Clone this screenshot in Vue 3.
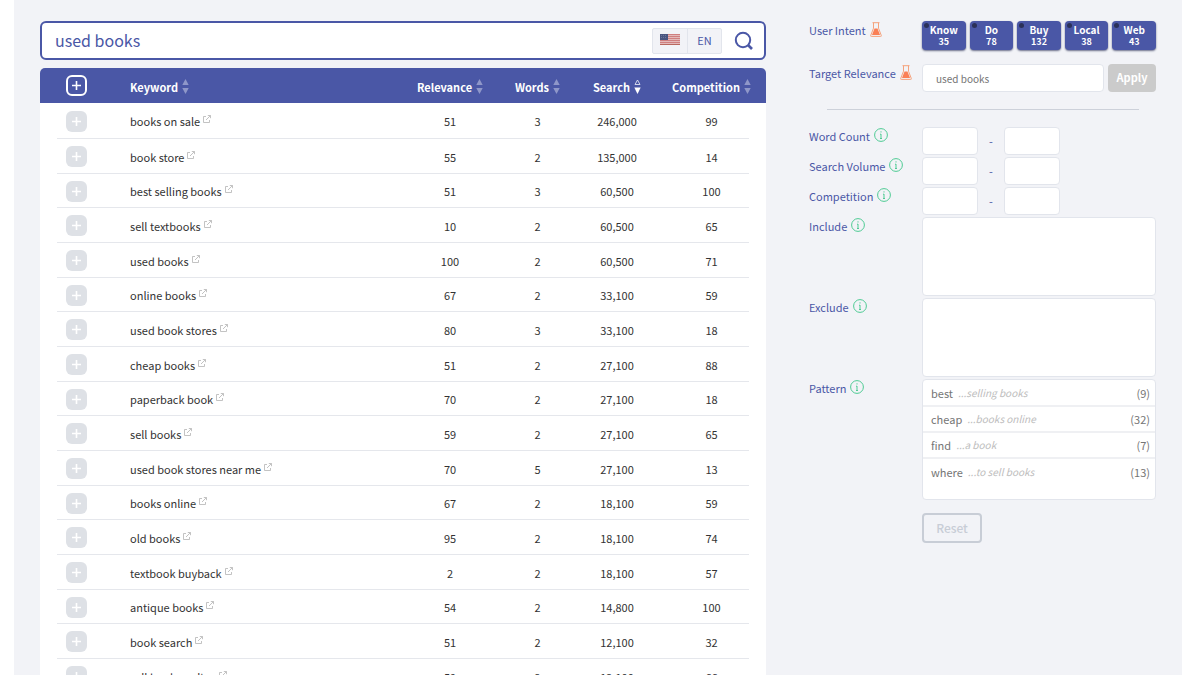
<script setup>
import { ref } from 'vue'

const query = ref('used books')
const target = ref('used books')

const columns = [
  { label: 'Relevance', active: false },
  { label: 'Words', active: false },
  { label: 'Search', active: true },
  { label: 'Competition', active: false },
]

const rows = [
  ['books on sale', 51, 3, '246,000', 99],
  ['book store', 55, 2, '135,000', 14],
  ['best selling books', 51, 3, '60,500', 100],
  ['sell textbooks', 10, 2, '60,500', 65],
  ['used books', 100, 2, '60,500', 71],
  ['online books', 67, 2, '33,100', 59],
  ['used book stores', 80, 3, '33,100', 18],
  ['cheap books', 51, 2, '27,100', 88],
  ['paperback book', 70, 2, '27,100', 18],
  ['sell books', 59, 2, '27,100', 65],
  ['used book stores near me', 70, 5, '27,100', 13],
  ['books online', 67, 2, '18,100', 59],
  ['old books', 95, 2, '18,100', 74],
  ['textbook buyback', 2, 2, '18,100', 57],
  ['antique books', 54, 2, '14,800', 100],
  ['book search', 51, 2, '12,100', 32],
  ['sell books online', 59, 2, '12,100', 66],
]

const intents = [
  ['Know', 35],
  ['Do', 78],
  ['Buy', 132],
  ['Local', 38],
  ['Web', 43],
]

const ranges = ['Word Count', 'Search Volume', 'Competition']
const areas = ['Include', 'Exclude']

const patterns = [
  ['best', '...selling books', 9],
  ['cheap', '...books online', 32],
  ['find', '...a book', 7],
  ['where', '...to sell books', 13],
]
</script>

<template>
  <div class="page">
    <main class="results">
      <form class="search" @submit.prevent>
        <input v-model="query" class="search-input" type="text" aria-label="Keyword search" />
        <div class="locale">
          <button type="button" class="locale-btn" aria-label="Country: United States">
            <svg width="20" height="11" viewBox="0 0 20 11" aria-hidden="true">
              <rect width="20" height="11" fill="#e3b9b9" />
              <path d="M0 .5h20M0 2.5h20M0 4.5h20M0 6.5h20M0 8.5h20M0 10.5h20" stroke="#cf7f7f" stroke-width="1" />
              <path d="M0 10.5h20" stroke="#b8685f" />
              <rect width="8" height="6" fill="#4a5580" />
              <path d="M1 1.5h6M1 3.5h6" stroke="#6a749a" stroke-dasharray="1 1" />
            </svg>
          </button>
          <button type="button" class="locale-btn">EN</button>
        </div>
        <button type="submit" class="search-btn" aria-label="Search">
          <svg width="20" height="20" viewBox="0 0 20 20" fill="none" stroke="#4a57a6" stroke-width="2" aria-hidden="true">
            <circle cx="9" cy="9" r="7.2" />
            <path d="M14 14l4 4" stroke-width="2.6" />
          </svg>
        </button>
      </form>

      <table class="keywords">
        <colgroup>
          <col class="c-add" />
          <col />
          <col class="c-rel" />
          <col class="c-words" />
          <col class="c-search" />
          <col class="c-comp" />
        </colgroup>
        <thead>
          <tr>
            <th>
              <button type="button" class="add add-all" aria-label="Add all keywords">
                <svg width="9" height="9" viewBox="0 0 9 9" stroke="#fff" stroke-width="1.6" aria-hidden="true"><path d="M4.500 0v9M0 4.500h9" /></svg>
              </button>
            </th>
            <th class="kw">
              <button type="button" class="sort">
                Keyword
                <svg width="7" height="15" viewBox="0 0 7 15" fill="#8f97c9" aria-hidden="true"><path d="M3.500 0L6.700 6H.3zM3.500 15L6.700 9H.3z" /></svg>
              </button>
            </th>
            <th v-for="c in columns" :key="c.label">
              <button type="button" class="sort">
                {{ c.label }}
                <svg v-if="c.active" width="7" height="15" viewBox="0 0 7 15" aria-hidden="true">
                  <path d="M3.500 1L6 5.500H1z" fill="none" stroke="#dfe2f2" stroke-width=".9" />
                  <path d="M3.500 15L6.700 8.500H.3z" fill="#fff" />
                </svg>
                <svg v-else width="7" height="15" viewBox="0 0 7 15" fill="#8f97c9" aria-hidden="true"><path d="M3.500 0L6.700 6H.3zM3.500 15L6.700 9H.3z" /></svg>
              </button>
            </th>
          </tr>
        </thead>
        <tbody>
          <tr v-for="r in rows" :key="r[0]">
            <td>
              <button type="button" class="add" :aria-label="'Add ' + r[0]">
                <svg width="9" height="9" viewBox="0 0 9 9" stroke="#fff" stroke-width="1.6" aria-hidden="true"><path d="M4.500 0v9M0 4.500h9" /></svg>
              </button>
            </td>
            <td class="kw">
              {{ r[0] }}<a href="#" class="ext" :aria-label="'Open ' + r[0]"><svg width="8" height="8" viewBox="0 0 8 8" fill="none" stroke="#b4b4b4" stroke-width=".8" aria-hidden="true"><path d="M3 1.500H.5v6h6V5M3 5L7.300.7M4.800.5h2.700v2.700" /></svg></a>
            </td>
            <td>{{ r[1] }}</td>
            <td>{{ r[2] }}</td>
            <td>{{ r[3] }}</td>
            <td>{{ r[4] }}</td>
          </tr>
        </tbody>
      </table>
    </main>

    <aside class="filters">
      <div class="row intent-row">
        <div class="label">
          User Intent
          <svg class="flask" width="12" height="15" viewBox="0 0 12 15" fill="none" stroke="#f5a27c" stroke-width="1" aria-hidden="true">
            <path d="M2.500.7h7M3.500.7v5.500L.7 13.500q-.3.900.6.900h9.400q.9 0 .6-.9L8.500 6.200V.7" />
            <path d="M4.500 6.500h3L10 13H2z" fill="#fa7f55" stroke="none" />
          </svg>
        </div>
        <div class="intents">
          <button v-for="i in intents" :key="i[0]" type="button" class="intent">
            <span class="dot"></span>
            <span class="intent-name">{{ i[0] }}</span>
            <span class="intent-count">{{ i[1] }}</span>
          </button>
        </div>
      </div>

      <div class="row">
        <label class="label" for="target">
          Target Relevance
          <svg class="flask" width="12" height="15" viewBox="0 0 12 15" fill="none" stroke="#f5a27c" stroke-width="1" aria-hidden="true">
            <path d="M2.500.7h7M3.500.7v5.500L.7 13.500q-.3.900.6.900h9.400q.9 0 .6-.9L8.500 6.200V.7" />
            <path d="M4.500 6.500h3L10 13H2z" fill="#fa7f55" stroke="none" />
          </svg>
        </label>
        <div class="target">
          <input id="target" v-model="target" class="field target-input" type="text" />
          <button type="button" class="apply">Apply</button>
        </div>
      </div>

      <hr class="rule" />

      <div class="stack">
        <div v-for="(name, n) in ranges" :key="name" class="row">
          <label class="label" :for="'min' + n">
            {{ name }}
            <svg class="info" width="14" height="14" viewBox="0 0 14 14" fill="none" stroke="#4fcb94" aria-hidden="true"><circle cx="7" cy="7" r="6.400" /><path d="M7 6v4.500M6 6.200h1M6 10.500h2M7 3.300v1.200" /></svg>
          </label>
          <div class="range">
            <input :id="'min' + n" class="field" type="text" />
            <span class="dash">-</span>
            <input class="field" type="text" :aria-label="name + ' maximum'" />
          </div>
        </div>

        <div v-for="name in areas" :key="name" class="row">
          <label class="label" :for="name">
            {{ name }}
            <svg class="info" width="14" height="14" viewBox="0 0 14 14" fill="none" stroke="#4fcb94" aria-hidden="true"><circle cx="7" cy="7" r="6.400" /><path d="M7 6v4.500M6 6.200h1M6 10.500h2M7 3.300v1.200" /></svg>
          </label>
          <textarea :id="name" class="field area"></textarea>
        </div>

        <div class="row">
          <div class="label">
            Pattern
            <svg class="info" width="14" height="14" viewBox="0 0 14 14" fill="none" stroke="#4fcb94" aria-hidden="true"><circle cx="7" cy="7" r="6.400" /><path d="M7 6v4.500M6 6.200h1M6 10.500h2M7 3.300v1.200" /></svg>
          </div>
          <div>
            <ul class="patterns">
              <li v-for="p in patterns" :key="p[0]">
                <span>{{ p[0] }}</span>
                <em>{{ p[1] }}</em>
                <span class="count">({{ p[2] }})</span>
              </li>
            </ul>
            <button type="button" class="reset">Reset</button>
          </div>
        </div>
      </div>
    </aside>
  </div>
</template>

<style>
body {
  background: #fff;
}
</style>

<style scoped>
.page,
.page * {
  box-sizing: border-box;
}
.page {
  display: grid;
  grid-template-columns: minmax(0, 726fr) minmax(0, 347fr);
  gap: 43px;
  height: 100vh;
  overflow: hidden;
  margin: 0 18px 0 14px;
  padding: 21px 26px 0;
  background: #f2f3f7;
  color: #333;
  font-family: "Noto Sans CJK SC", "Noto Sans", sans-serif;
  font-size: 11px;
  line-height: 20px;
}
button,
input,
textarea {
  margin: 0;
  font: inherit;
}
button {
  padding: 0;
  border: 0;
  background: none;
  color: inherit;
}
svg {
  display: block;
}

.search {
  display: flex;
  align-items: center;
  height: 39px;
  padding: 0 10px 0 13px;
  border: 2px solid #4a57a6;
  border-radius: 6px;
  background: #fff;
}
.search-input {
  flex: 1;
  min-width: 0;
  padding: 0 0 2px;
  border: 0;
  outline: 0;
  background: none;
  color: #4a57a6;
  font-size: 16px;
}
.locale {
  display: flex;
  height: 26px;
  margin-right: 12px;
  border: 1px solid #e2e5ec;
  border-radius: 2px;
  background: #f2f3f7;
}
.locale-btn {
  display: flex;
  align-items: center;
  justify-content: center;
  width: 34px;
  padding-bottom: 2px;
  color: #4a57a6;
}
.locale-btn + .locale-btn {
  border-left: 1px solid #e2e5ec;
}

.keywords {
  width: 100%;
  margin-top: 8px;
  border-spacing: 0;
  table-layout: fixed;
  background: #fff;
  border-radius: 5px 5px 0 0;
}
.c-add {
  width: 72px;
}
.c-rel {
  width: 96px;
}
.c-words {
  width: 79px;
}
.c-search {
  width: 80px;
}
.c-comp {
  width: 109px;
}
th,
td {
  padding: 0;
  text-align: center;
  white-space: nowrap;
}
th {
  height: 35px;
  background: #4a57a6;
  color: #fff;
  font-weight: 700;
}
th:first-child {
  border-top-left-radius: 5px;
}
th:last-child {
  border-top-right-radius: 5px;
}
.kw {
  padding-left: 18px;
  text-align: left;
}
.sort {
  display: inline-flex;
  align-items: center;
  gap: 4px;
  vertical-align: middle;
}
td {
  height: 35px;
}
tbody tr:first-child td {
  height: 36px;
}
tbody tr:nth-child(3n) td {
  height: 34px;
}
tbody tr {
  background: linear-gradient(#e5e7ec, #e5e7ec) no-repeat center bottom / calc(100% - 34px) 1px;
}
.add {
  display: flex;
  align-items: center;
  justify-content: center;
  width: 21px;
  height: 21px;
  margin: 0 auto;
  border-radius: 6px;
  background: #dee1e6;
}
.add-all {
  border: 2px solid #fff;
  background: none;
}
.ext {
  display: inline-block;
  margin-left: 3px;
  vertical-align: 3px;
}

.row {
  display: grid;
  grid-template-columns: 113px minmax(0, 1fr);
}
.label {
  display: flex;
  gap: 4px;
  height: 20px;
  color: #4a57a6;
  line-height: 19px;
  white-space: nowrap;
}
.flask,
.info {
  margin-top: 1px;
}
.intent-row {
  margin-bottom: 14px;
}
.intents {
  display: grid;
  grid-template-columns: repeat(5, minmax(0, 1fr));
  gap: 4px;
}
.intent {
  position: relative;
  display: flex;
  flex-direction: column;
  align-items: center;
  height: 29px;
  padding-top: 2px;
  border-radius: 4px;
  background: #4a57a6;
  box-shadow: 0 1px 2px #6a6f8a;
  color: #fff;
  font-weight: 700;
}
.dot {
  position: absolute;
  top: 2px;
  left: 2px;
  width: 5px;
  height: 5px;
  border-radius: 50%;
  background: #2b3158;
}
.intent-name {
  font-size: 10px;
  line-height: 13px;
}
.intent-count {
  font-size: 9px;
  line-height: 12px;
}
.target {
  display: grid;
  grid-template-columns: minmax(0, 1fr) 48px;
  gap: 4px;
}
.field {
  display: block;
  width: 100%;
  height: 28px;
  padding: 0 6px;
  border: 1px solid #e2e5ec;
  border-radius: 4px;
  outline: 0;
  background: #fff;
  color: #757575;
}
.target-input {
  padding: 0 13px;
  font-size: 10px;
}
.apply {
  height: 28px;
  padding-bottom: 2px;
  border-radius: 4px;
  background: #cbcbcb;
  color: #fff;
  font-weight: 700;
}
.rule {
  height: 1px;
  margin: 17px 17px 17px 18px;
  border: 0;
  background: #cdd1da;
}
.stack {
  display: grid;
  gap: 2px;
}
.range {
  display: grid;
  grid-template-columns: 56px 26px 56px;
}
.dash {
  padding-top: 4px;
  color: #4a57a6;
  text-align: center;
}
.area {
  height: 79px;
  resize: none;
}
.patterns {
  height: 121px;
  margin: 0;
  padding: 1px 0 0;
  border: 1px solid #e2e5ec;
  border-radius: 4px;
  background: #fff;
  list-style: none;
}
.patterns li {
  display: flex;
  align-items: center;
  gap: 5px;
  height: 26px;
  padding: 0 5px 0 8px;
  border-bottom: 2px solid #eff0f3;
  color: #757575;
}
.patterns li:last-child {
  border-bottom: 0;
}
.patterns em {
  color: #bdbdbd;
  font-size: 10px;
}
.count {
  margin-left: auto;
}
.reset {
  width: 60px;
  height: 30px;
  margin-top: 13px;
  border: 2px solid #c8cdd6;
  border-radius: 4px;
  color: #c8cdd6;
  font-size: 12px;
  font-weight: 500;
}
</style>
